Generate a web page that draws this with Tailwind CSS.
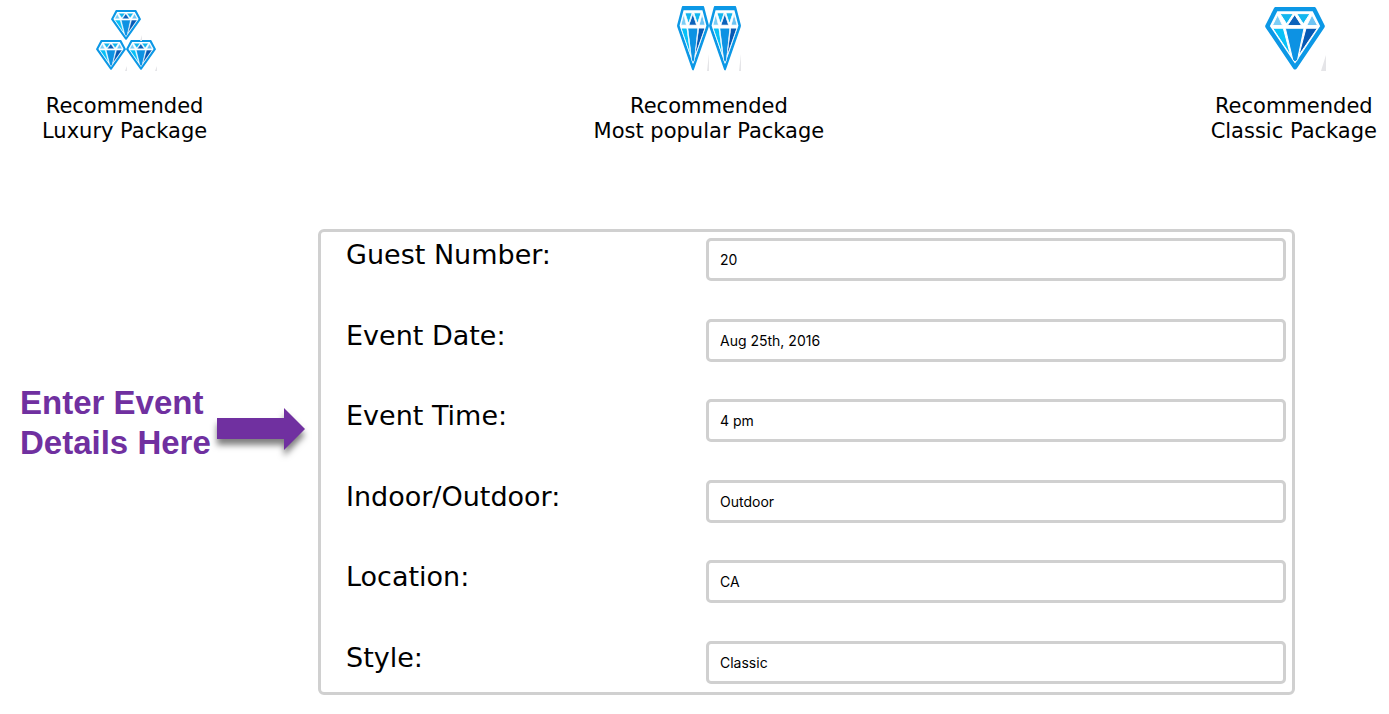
<!DOCTYPE html>
<html lang="en">
<head>
<meta charset="utf-8">
<meta name="viewport" content="width=device-width, initial-scale=1">
<title>Event Packages</title>
<script src="https://cdn.jsdelivr.net/npm/@tailwindcss/browser@4"></script>
</head>
<body class="bg-white font-['DejaVu_Sans',Verdana,sans-serif] text-black">
<svg class="hidden" aria-hidden="true">
  <symbol id="diamond" viewBox="0 0 180 190" preserveAspectRatio="none">
    <path d="M33 6H147L173 58L90 182L7 58Z" fill="#fff" stroke="#0c98e6" stroke-width="13" stroke-linejoin="round"/>
    <g stroke="#fff" stroke-width="3">
      <path d="M38 24L53 56H22Z" fill="#7dcef6"/>
      <path d="M45 20H85L65 51Z" fill="#12b6ef"/>
      <path d="M89 23L110 56H67Z" fill="#0b62bb"/>
      <path d="M95 20H135L115 51Z" fill="#12b6ef"/>
      <path d="M141 24L158 56H125Z" fill="#6fc4f3"/>
      <path d="M23 64H55L77 146Z" fill="#08c1f7"/>
      <path d="M61 64H117L98 158Q90 172 83 158Z" fill="#0d92e3"/>
      <path d="M123 64H157L101 147Z" fill="#0759b4"/>
    </g>
  </symbol>
  <symbol id="shade" viewBox="0 0 6 18" preserveAspectRatio="none">
    <path d="M6 0V18H0Z" fill="#e5e5e8"/>
  </symbol>
</svg>

<header class="flex items-start justify-between pt-[6px] pr-[12px] pl-[42px] text-center text-[21px] leading-[25px]">
  <section>
    <svg class="mx-auto h-[66px] w-[64px]" viewBox="0 0 64 66" aria-hidden="true">
      <use href="#diamond" x="18" y="4" width="30" height="30"/>
      <use href="#diamond" x="3" y="34" width="30" height="30"/>
      <use href="#diamond" x="33" y="34" width="30" height="30"/>
      <use href="#shade" x="47" y="29" width="2" height="6"/>
      <use href="#shade" x="32" y="60" width="2" height="5"/>
      <use href="#shade" x="62" y="60" width="2" height="5"/>
    </svg>
    <h2 class="mt-[22px]">Recommended<br>Luxury Package</h2>
  </section>
  <section>
    <svg class="mx-auto h-[66px] w-[64px]" viewBox="0 0 64 66" aria-hidden="true">
      <use href="#diamond" x="0" y="0" width="32" height="65"/>
      <use href="#diamond" x="32" y="0" width="32" height="65"/>
      <use href="#shade" x="30" y="48" width="2" height="17"/>
      <use href="#shade" x="62" y="48" width="2" height="17"/>
    </svg>
    <h2 class="mt-[22px]">Recommended<br>Most popular Package</h2>
  </section>
  <section>
    <svg class="mx-auto h-[66px] w-[64px]" viewBox="0 0 64 66" aria-hidden="true">
      <use href="#diamond" x="3" y="1" width="60" height="63"/>
      <use href="#shade" x="59" y="49" width="5" height="16"/>
    </svg>
    <h2 class="mt-[22px]">Recommended<br>Classic Package</h2>
  </section>
</header>

<main class="mt-[85px] flex items-start pr-[94px] pl-[20px]">
  <aside class="mt-[154px] flex w-[298px] shrink-0 items-center">
    <p class="w-[196px] shrink-0 font-['Liberation_Sans',Arial,sans-serif] text-[33px] leading-[40px] font-bold whitespace-nowrap text-[#7030a0]">Enter Event<br>Details Here</p>
    <svg class="mt-[18px] h-[56px] w-[94px] shrink-0 overflow-visible" viewBox="0 0 94 56" aria-hidden="true">
      <path class="drop-shadow-[0_6px_3px_rgba(0,0,0,0.5)]" d="M1 14H68V4L89 25L68 46V35H1Z" fill="#7030a0"/>
    </svg>
  </aside>
  <form class="flex min-h-[466px] min-w-0 flex-1 flex-col justify-between rounded-[6px] border-3 border-[#d0d0d0] pt-[6px] pr-[6px] pb-[8px] pl-[25px]">
    <div class="flex items-start">
      <label for="guests" class="w-[360px] shrink-0 text-[27px] leading-[34px]">Guest Number:</label>
      <input id="guests" type="text" value="20" class="h-[43px] min-w-0 flex-1 rounded-[5px] border-3 border-[#d0d0d0] bg-white px-[11px] font-[Inter,sans-serif] text-[14px]">
    </div>
    <div class="flex items-start">
      <label for="date" class="w-[360px] shrink-0 text-[27px] leading-[34px]">Event Date:</label>
      <input id="date" type="text" value="Aug 25th, 2016" class="h-[43px] min-w-0 flex-1 rounded-[5px] border-3 border-[#d0d0d0] bg-white px-[11px] font-[Inter,sans-serif] text-[14px]">
    </div>
    <div class="flex items-start">
      <label for="time" class="w-[360px] shrink-0 text-[27px] leading-[34px]">Event Time:</label>
      <input id="time" type="text" value="4 pm" class="h-[43px] min-w-0 flex-1 rounded-[5px] border-3 border-[#d0d0d0] bg-white px-[11px] font-[Inter,sans-serif] text-[14px]">
    </div>
    <div class="flex items-start">
      <label for="setting" class="w-[360px] shrink-0 text-[27px] leading-[34px]">Indoor/Outdoor:</label>
      <input id="setting" type="text" value="Outdoor" class="h-[43px] min-w-0 flex-1 rounded-[5px] border-3 border-[#d0d0d0] bg-white px-[11px] font-[Inter,sans-serif] text-[14px]">
    </div>
    <div class="flex items-start">
      <label for="location" class="w-[360px] shrink-0 text-[27px] leading-[34px]">Location:</label>
      <input id="location" type="text" value="CA" class="h-[43px] min-w-0 flex-1 rounded-[5px] border-3 border-[#d0d0d0] bg-white px-[11px] font-[Inter,sans-serif] text-[14px]">
    </div>
    <div class="flex items-start">
      <label for="style" class="w-[360px] shrink-0 text-[27px] leading-[34px]">Style:</label>
      <input id="style" type="text" value="Classic" class="h-[43px] min-w-0 flex-1 rounded-[5px] border-3 border-[#d0d0d0] bg-white px-[11px] font-[Inter,sans-serif] text-[14px]">
    </div>
  </form>
</main>
</body>
</html>
